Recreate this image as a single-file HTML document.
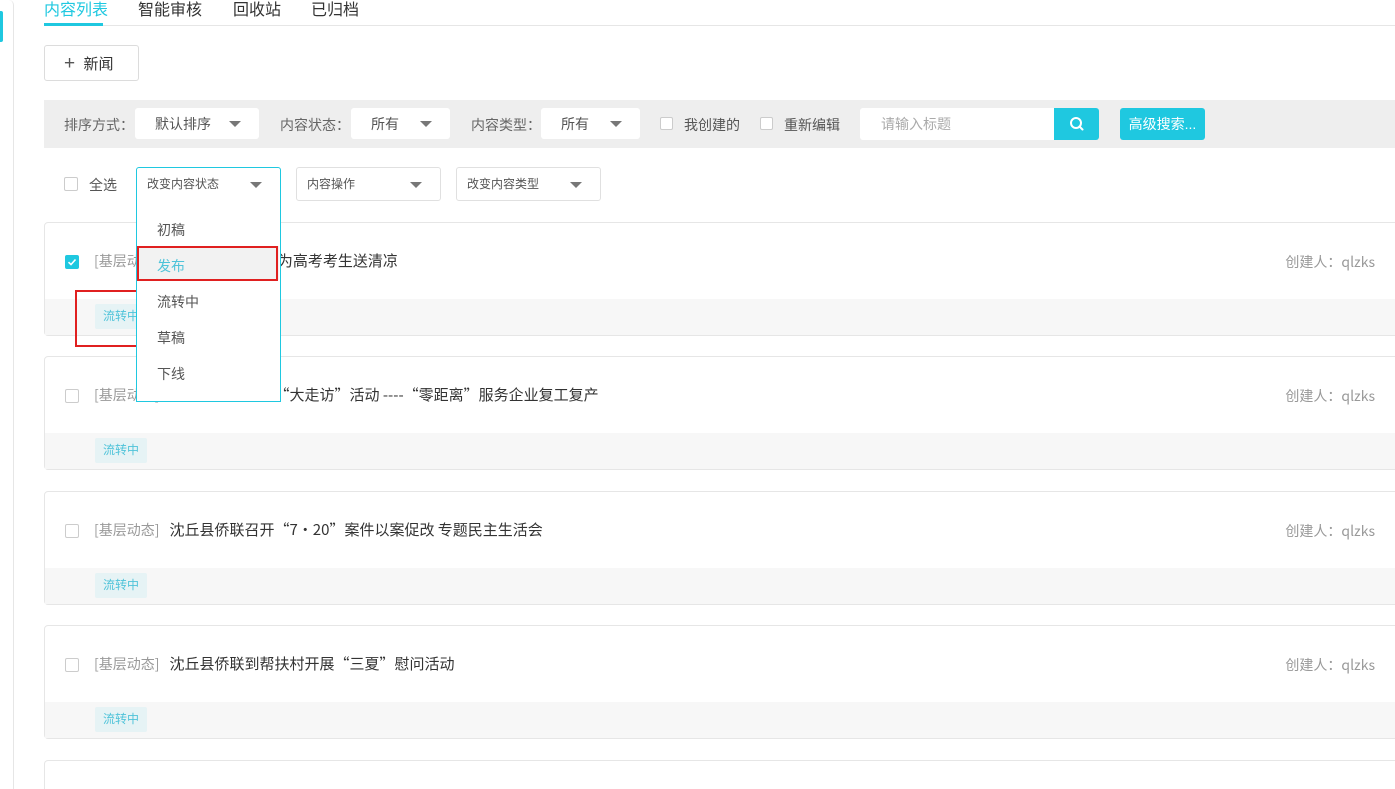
<!DOCTYPE html>
<html><head><meta charset="utf-8"><style>
*{margin:0;padding:0;box-sizing:border-box}
html,body{width:1395px;height:789px;overflow:hidden}
body{background:#fff;font-family:"Liberation Sans","Noto Sans CJK SC",sans-serif;color:#333;position:relative;font-size:14px}
.a{position:absolute}
.sb{left:0;top:0;width:14px;height:789px;border-right:1px solid #e6e6e6;border-top-right-radius:5px}
.cb{position:absolute;width:14px;height:14px;border:1px solid #ccc;border-radius:2px;background:#fff}
.sel{position:absolute;background:#fff;border-radius:3px;height:31px;line-height:33px;font-size:14px;color:#555}
.tri{position:absolute;right:18px;top:13px;width:0;height:0;border-left:6px solid transparent;border-right:6px solid transparent;border-top:6px solid #777}
.sel2{position:absolute;background:#fff;border:1px solid #e0e0e0;border-radius:3px;height:34px;line-height:32px;font-size:12px;color:#555;padding-left:10px}
.card{position:absolute;left:44px;width:1360px;border:1px solid #e6e6e6;border-radius:4px;height:114px;background:#fff}
.card .sub{position:absolute;left:0;right:0;top:76px;height:36px;background:#f7f7f7}
.card .tag{position:absolute;left:50px;top:5px;height:25px;line-height:25px;padding:0 8px;background:#e6f3f5;color:#4fc3d9;font-size:12px;border-radius:2px}
.card .t{position:absolute;left:49px;top:27px;font-size:15px;color:#333;white-space:nowrap;font-family:"Noto Sans CJK SC",sans-serif}
.card .t span{color:#999;font-size:14px;margin-right:10px}
.card .c{position:absolute;right:28px;top:29px;font-size:14px;color:#999;font-family:"Noto Sans CJK SC",sans-serif}
.card .cb{left:20px;top:32px}
</style></head><body>
<div class="a sb"></div>
<div class="a" style="left:0;top:11px;width:3px;height:31px;background:#1fc8e0;border-radius:0 2px 2px 0"></div>

<div class="a" style="left:44px;top:-4px;font-size:16px;color:#1fc8e0">内容列表</div>
<div class="a" style="left:138px;top:-4px;font-size:16px;color:#333">智能审核</div>
<div class="a" style="left:233px;top:-4px;font-size:16px;color:#333">回收站</div>
<div class="a" style="left:311px;top:-4px;font-size:16px;color:#333">已归档</div>
<div class="a" style="left:44px;top:25px;width:1351px;height:1px;background:#e6e6e6"></div>
<div class="a" style="left:44px;top:23px;width:59px;height:3px;background:#1fc8e0"></div>

<div class="a" style="left:44px;top:45px;width:95px;height:36px;border:1px solid #dcdcdc;border-radius:3px;line-height:36px;font-size:15px;color:#333;padding-left:19px"><span style="font-size:19px;color:#555;font-weight:300">+</span>&nbsp; 新闻</div>

<div class="a" style="left:44px;top:100px;width:1351px;height:48px;background:#eeeeee"></div>
<div class="a" style="left:64px;top:115px;font-size:14px;color:#666">排序方式：</div>
<div class="sel" style="left:135px;top:108px;width:124px;padding-left:20px">默认排序<div class="tri"></div></div>
<div class="a" style="left:280px;top:115px;font-size:14px;color:#666">内容状态：</div>
<div class="sel" style="left:351px;top:108px;width:99px;padding-left:20px">所有<div class="tri"></div></div>
<div class="a" style="left:471px;top:115px;font-size:14px;color:#666">内容类型：</div>
<div class="sel" style="left:541px;top:108px;width:99px;padding-left:20px">所有<div class="tri"></div></div>
<div class="cb" style="left:660px;top:117px;width:13px;height:13px"></div>
<div class="a" style="left:684px;top:115px;font-size:14px;color:#555">我创建的</div>
<div class="cb" style="left:760px;top:117px;width:13px;height:13px"></div>
<div class="a" style="left:784px;top:115px;font-size:14px;color:#555">重新编辑</div>
<div class="a" style="left:860px;top:108px;width:195px;height:32px;background:#fff;border-radius:3px 0 0 3px;line-height:32px;padding-left:21px;font-size:14px;color:#aaa">请输入标题</div>
<div class="a" style="left:1054px;top:108px;width:45px;height:32px;background:#1fc8e0;border-radius:0 3px 3px 0">
<svg width="45" height="32" viewBox="0 0 45 32"><circle cx="22" cy="15" r="5" fill="none" stroke="#fff" stroke-width="2"/><line x1="25.5" y1="18.5" x2="28.5" y2="21.5" stroke="#fff" stroke-width="2" stroke-linecap="round"/></svg></div>
<div class="a" style="left:1120px;top:108px;width:85px;height:32px;background:#1fc8e0;border-radius:3px;color:#fff;line-height:32px;text-align:center;font-size:14px">高级搜索...</div>

<div class="cb" style="left:64px;top:177px;width:14px;height:14px"></div>
<div class="a" style="left:89px;top:175px;font-size:14px;color:#555">全选</div>
<div class="sel2" style="left:296px;top:167px;width:145px">内容操作<div class="tri" style="top:14px"></div></div>
<div class="sel2" style="left:456px;top:167px;width:145px">改变内容类型<div class="tri" style="top:14px"></div></div>

<div class="card" style="top:222px"><div class="cb" style="background:#1fc8e0;border-color:#1fc8e0"><svg width="12" height="12" viewBox="0 0 12 12" style="position:absolute;left:0;top:0"><path d="M2.5 6.2 L5 8.5 L9.5 3.5" fill="none" stroke="#fff" stroke-width="1.6"/></svg></div><div class="t"><span>[基层动态]</span>沈丘县侨联情系 为高考考生送清凉</div><div class="c">创建人：qlzks</div><div class="sub"><div class="tag">流转中</div></div></div>
<div class="card" style="top:356px"><div class="cb"></div><div class="t"><span>[基层动态]</span>沈丘县侨联开展“大走访”活动 ----“零距离”服务企业复工复产</div><div class="c">创建人：qlzks</div><div class="sub"><div class="tag">流转中</div></div></div>
<div class="card" style="top:491px"><div class="cb"></div><div class="t"><span>[基层动态]</span>沈丘县侨联召开“7·20”案件以案促改 专题民主生活会</div><div class="c">创建人：qlzks</div><div class="sub"><div class="tag">流转中</div></div></div>
<div class="card" style="top:625px"><div class="cb"></div><div class="t"><span>[基层动态]</span>沈丘县侨联到帮扶村开展“三夏”慰问活动</div><div class="c">创建人：qlzks</div><div class="sub"><div class="tag">流转中</div></div></div>
<div class="card" style="top:760px;height:29px;border-bottom:none;border-radius:4px 4px 0 0"></div>

<div class="a" style="left:75px;top:290px;width:69px;height:57px;border:2px solid #e02020"></div>

<div class="a" style="left:136px;top:167px;width:145px;height:34px;border:1px solid #1fc8e0;border-radius:3px 3px 0 0;background:#fff;line-height:32px;font-size:12px;color:#555;padding-left:10px">改变内容状态<div class="tri" style="top:14px"></div></div>
<div class="a" style="left:136px;top:200px;width:145px;height:202px;border:1px solid #1fc8e0;border-top:none;background:#fff;font-size:14px;color:#555">
<div class="a" style="left:20px;top:20px">初稿</div>
<div class="a" style="left:0;top:46px;width:142px;height:34px;background:#f2f2f2"></div>
<div class="a" style="left:20px;top:56px;color:#4fc3d9">发布</div>
<div class="a" style="left:20px;top:92px">流转中</div>
<div class="a" style="left:20px;top:128px">草稿</div>
<div class="a" style="left:20px;top:164px">下线</div>
</div>
<div class="a" style="left:137px;top:246px;width:141px;height:35px;border:2px solid #e02020"></div>
</body></html>
